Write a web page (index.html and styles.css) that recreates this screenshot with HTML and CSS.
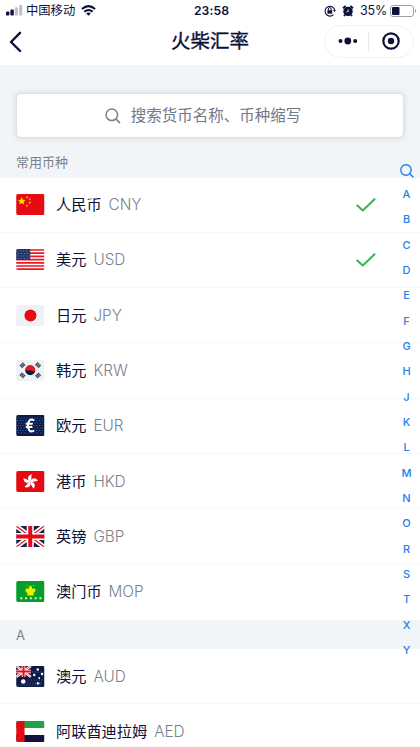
FILE: index.html
```html
<!DOCTYPE html>
<html lang="zh-CN">
<head>
<meta charset="UTF-8">
<meta name="viewport" content="width=device-width, initial-scale=1">
<title>火柴汇率</title>
<link rel="stylesheet" href="styles.css">
</head>
<body>
<div class="app">
  <header class="top">
    <div class="status">
      <div class="status-left">
        <svg class="signal" width="17" height="11" viewBox="0 0 17 11"><rect x="0" y="6.5" width="3.4" height="4" rx="1" fill="#0d1038"/><rect x="4.4" y="4.5" width="3.4" height="6" rx="1" fill="#0d1038"/><rect x="8.8" y="2.3" width="3.2" height="8.2" rx="1" fill="#c0c1cb"/><rect x="13.1" y="0" width="3.2" height="10.5" rx="1" fill="#c0c1cb"/></svg>
        <span class="carrier">中国移动</span>
        <svg class="wifi" width="15" height="11" viewBox="0 0 15 11" fill="none" stroke="#0d1038" stroke-width="2"><path d="M.9 4.1Q7.5-1.8 14.1 4.1M3.3 6.8Q7.5 3.2 11.7 6.8"/><path d="M5.2 8.5Q7.5 6.7 9.8 8.5L7.5 10.8Z" fill="#0d1038" stroke="none"/></svg>
      </div>
      <span class="clock">23:58</span>
      <div class="status-right">
        <svg width="12" height="12" viewBox="0 0 12 12" fill="none" stroke="#0d1038"><path d="M9.5 9.6A4.9 4.9 0 1 1 10.7 5" stroke-width="1.1"/><path d="M8.9 4.9h3L10.6 7Z" fill="#0d1038" stroke="none"/><rect x="3.4" y="5.2" width="4.8" height="3.5" fill="#0d1038" stroke="none"/><path d="M4.4 5.5V4a1.4 1.4 0 0 1 2.8 0v1.5"/></svg>
        <svg class="alarm" width="12" height="12" viewBox="0 0 12 12"><circle cx="6" cy="6.4" r="4.7" fill="#0d1038"/><path d="M1 3.2 3.6 1M11 3.2 8.4 1M3 9.8 2 11M9 9.8l1 1.2" stroke="#0d1038" stroke-width="1.9"/><path d="M6.2 4.2v2.6H4.4" fill="none" stroke="#fff" stroke-width=".8"/></svg>
        <span class="percent">35%</span>
        <svg width="27" height="12" viewBox="0 0 27 12"><rect x=".5" y=".5" width="23" height="11" rx="2.5" fill="#fff" stroke="#9ea0ab"/><rect x="2" y="2" width="7.5" height="8" rx="1" fill="#0d1038"/><path d="M25 4c1.5.5 1.5 3.5 0 4z" fill="#9ea0ab"/></svg>
      </div>
    </div>
    <nav class="nav">
      <svg class="back" width="14" height="22" viewBox="0 0 14 22" fill="none" stroke="#0d1038" stroke-width="2.4" stroke-linecap="round" stroke-linejoin="round"><path d="M11 2.8 2 12l9 8.8"/></svg>
      <h1>火柴汇率</h1>
      <div class="capsule">
        <svg width="20" height="8" viewBox="0 0 20 8" fill="#0d1038"><circle cx="2.5" cy="4" r="2"/><circle cx="9.8" cy="4" r="3.4"/><circle cx="17.2" cy="4" r="2"/></svg>
        <i></i>
        <svg width="18" height="18" viewBox="0 0 18 18"><circle cx="9" cy="9" r="7.7" fill="none" stroke="#0d1038" stroke-width="2.2"/><circle cx="9" cy="9" r="3.2" fill="#0d1038"/></svg>
      </div>
    </nav>
  </header>

  <section class="search-area">
    <div class="search">
      <svg width="16" height="16" viewBox="0 0 16 16" fill="none" stroke="#7b7f90" stroke-width="1.5" stroke-linecap="round"><circle cx="6.8" cy="6.8" r="5.8"/><path d="m11.1 11.1 3.5 3.5"/></svg>
      <span>搜索货币名称、币种缩写</span>
    </div>
    <h2>常用币种</h2>
  </section>

  <ul class="list">
    <li><svg class="flag" viewBox="0 0 28 21"><rect width="28" height="21" fill="#e60a12"/><path d="m5.5 3 1.1 2.7 2.8.2-2.1 1.8.7 2.8-2.5-1.6L3 10.5l.7-2.8-2.1-1.8 2.8-.2Z" fill="#f8e500"/><path d="M10 2.5h1.6v1.6H10zM12.7 4.5h1.6v1.6h-1.6zM12.7 7.8h1.6v1.6h-1.6zM10 10.8h1.6v1.6H10z" fill="#f3c90c"/></svg><b>人民币</b><span>CNY</span><svg class="check" viewBox="0 0 20 14"><path d="m1.3 7.5 5.5 5L18.5 1.3"/></svg></li>
    <li><svg class="flag" viewBox="0 0 28 21"><rect width="28" height="21" fill="#fff"/><path d="M0 1h28M0 4.2h28M0 7.4h28M0 10.6h28M0 13.8h28M0 17h28M0 20.2h28" stroke="#e81922" stroke-width="1.7"/><path d="M0 0h14v11H0z" fill="#203568"/><path d="M1 2h13M2 4.5h12M1 7h13M2 9.5h12" stroke="#638bc0" stroke-dasharray="1 2"/></svg><b>美元</b><span>USD</span><svg class="check" viewBox="0 0 20 14"><path d="m1.3 7.5 5.5 5L18.5 1.3"/></svg></li>
    <li><svg class="flag" viewBox="0 0 28 21"><rect width="28" height="21" fill="#f0f1f3"/><circle cx="14.2" cy="10.5" r="6" fill="#e90b13"/></svg><b>日元</b><span>JPY</span></li>
    <li><svg class="flag" viewBox="0 0 28 21"><rect width="28" height="21" fill="#f0f1f3"/><circle cx="14" cy="10.2" r="5" fill="#11163e"/><path d="M9.3 8.6a5 5 0 0 1 9.6 2.2c-2 1.8-3.2-.7-5-.5s-3.3 1.5-4.6-1.7" fill="#e91a20"/><g stroke="#3e4152" stroke-width="4" stroke-dasharray="1.3 .4"><path d="m4.5 6.8 3.7-3.2M20 3.6l3.7 3.2M4.5 13.8 8.2 17M20 17l3.7-3.2"/></g></svg><b>韩元</b><span>KRW</span></li>
    <li><svg class="flag" viewBox="0 0 28 21"><rect width="28" height="21" fill="#10183d"/><g stroke="#2d78d8" stroke-width="1" stroke-dasharray="1 1.7"><path d="M2 3h25M1 5.5h26M2 8h25M1 10.5h26M2 13h25M1 15.5h26M2 18h25"/></g><path d="M18 5.5c-4-2.5-6.2 0-6.2 5s2.3 7.4 6.2 5M9.5 8.8h7M9.5 12h6.6" fill="none" stroke="#fff" stroke-width="2"/></svg><b>欧元</b><span>EUR</span></li>
    <li><svg class="flag" viewBox="0 0 28 21"><rect width="28" height="21" fill="#e60a12"/><g transform="translate(14 10.7)" fill="#fff"><path id="petal" d="M0 0C-3.4-2.3-2.8-6.8 1.8-7.5.4-5.2 2.2-3.4 0 0"/><use href="#petal" transform="rotate(72)"/><use href="#petal" transform="rotate(144)"/><use href="#petal" transform="rotate(216)"/><use href="#petal" transform="rotate(288)"/></g></svg><b>港币</b><span>HKD</span></li>
    <li><svg class="flag" viewBox="0 0 28 21"><g id="union"><rect width="28" height="21" fill="#15214e"/><path d="m0 0 28 21M28 0 0 21" stroke="#fff" stroke-width="4.6"/><path d="m0 0 28 21M28 0 0 21" stroke="#e51c26" stroke-width="1.3"/><path d="M14 0v21M0 10.5h28" stroke="#fff" stroke-width="7"/><path d="M14 0v21M0 10.5h28" stroke="#e60a16" stroke-width="4"/></g></svg><b>英镑</b><span>GBP</span></li>
    <li><svg class="flag" viewBox="0 0 28 21"><rect width="28" height="21" fill="#079d2c"/><path d="M14.2 4.2q2.2 1.8 1.6 3.5 4.2-.9 3.3 2-.5 2.2-2.4 2.3l1.3 2q-3.8 1-7.6 0l1.3-2q-2.1-.1-2.5-2.3-.7-2.9 3.4-2Q12 6 14.2 4.2" fill="#f3ec00"/><path d="m10.5 5 .8-.7M16.8 4l.8.8" stroke="#f3ec00"/><path d="M4 17.3h22" stroke="#d6f1bd" stroke-width="2" stroke-dasharray="2 2.8"/></svg><b>澳门币</b><span>MOP</span></li>
  </ul>
  <h2 class="letter">A</h2>
  <ul class="list">
    <li><svg class="flag" viewBox="0 0 28 21"><rect width="28" height="21" fill="#11183d"/><use href="#union" transform="scale(.52)"/><g fill="#fff"><circle cx="7" cy="15.5" r="2.3"/><circle cx="21.5" cy="3.5" r="1.2"/><circle cx="18" cy="9" r="1.2"/><circle cx="25.8" cy="8" r="1.2"/><circle cx="23" cy="12" r=".9"/><circle cx="21.8" cy="17.3" r="1.4"/></g><path d="M12 14h15M11 17h16M16 6h11M2 19h24" stroke="#2d78d8" stroke-width="1" stroke-dasharray="1 1.7"/></svg><b>澳元</b><span>AUD</span></li>
    <li><svg class="flag" viewBox="0 0 28 21"><rect width="28" height="21" fill="#fff"/><path d="M0 0h28v7H0z" fill="#21a345"/><path d="M0 14h28v7H0z" fill="#10153d"/><path d="M0 0h8.3v21H0z" fill="#e60a12"/></svg><b>阿联酋迪拉姆</b><span>AED</span></li>
  </ul>

  <aside class="index">
    <svg width="14" height="14" viewBox="0 0 14 14" fill="none" stroke="#257eeb" stroke-width="1.4" stroke-linecap="round"><circle cx="6" cy="6" r="5.2"/><path d="m10 10 3.1 3.1"/></svg>
    <span>A</span><span>B</span><span>C</span><span>D</span><span>E</span><span>F</span><span>G</span><span>H</span><span>J</span><span>K</span><span>L</span><span>M</span><span>N</span><span>O</span><span>R</span><span>S</span><span>T</span><span>X</span><span>Y</span>
  </aside>
</div>
</body>
</html>
```
FILE: styles.css
```css
* { box-sizing: border-box; }
body {
  margin: 0;
  background: #fff;
  color: #0d1038;
  font-family: Inter, "Noto Sans CJK SC", sans-serif;
}
h1, h2, ul { margin: 0; padding: 0; }
svg { display: block; flex: none; }
.app { position: relative; height: 747px; overflow: hidden; }

.top { height: 65px; }
.status {
  display: grid;
  grid-template-columns: 1fr auto 1fr;
  align-items: center;
  height: 21px;
  padding: 0 3px 0 6px;
}
.status-left, .status-right { display: flex; align-items: center; }
.status-right { justify-content: flex-end; }
.carrier { margin-left: 3px; font-size: 12.3px; line-height: 18px; }
.wifi { margin-left: 6px; }
.clock { font-size: 12.2px; font-weight: 600; letter-spacing: .1px; }
.alarm { margin-left: 6px; }
.percent { margin: 0 3px 0 6px; font-size: 12.5px; letter-spacing: -.2px; }
.nav {
  display: grid;
  grid-template-columns: 1fr auto 1fr;
  align-items: center;
  height: 40px;
  padding: 0 6px 0 9px;
}
.nav h1 {
  padding-right: 3px;
  font-size: 19.5px;
  line-height: 28px;
  font-weight: 400;
  -webkit-text-stroke: .35px currentColor;
}
.capsule {
  display: flex;
  align-items: center;
  justify-self: end;
  width: 90px;
  height: 33px;
  padding-left: 13px;
  border: 1px solid #f0f2f4;
  border-radius: 17px;
}
.capsule i { width: 1px; height: 19px; margin: 0 13px 0 10px; background: #e3e9ec; }

.search-area { height: 112.5px; padding: 28px 16px 0; background: #f1f5f8; }
.search {
  display: flex;
  align-items: center;
  justify-content: center;
  gap: 10px;
  height: 45px;
  padding-right: 14px;
  border: 1px solid #dedfe1;
  border-radius: 5px;
  background: #fff;
  box-shadow: 0 0 6px rgba(0, 0, 0, .12);
  color: #747887;
  font-size: 15.5px;
}
.search span { padding-bottom: 4px; }
h2 { color: #7b7f8d; font-size: 13px; line-height: 20px; font-weight: 400; }
.search-area h2 { margin-top: 14px; }

.list { list-style: none; }
.list li {
  display: flex;
  align-items: center;
  height: 55.33px;
  padding: 0 44px 0 16px;
  border-bottom: 1px solid #f7f7f9;
}
.list li:last-child { border-bottom-color: transparent; }
.flag { width: 28.5px; height: 21px; margin-right: 11.5px; border-radius: 2px; }
.list b { padding-bottom: 3px; font-size: 15.2px; font-weight: 400; }
.list span { margin-left: 7px; color: #7b7f8d; font-size: 15.3px; font-weight: 300; }
.check {
  width: 20px;
  height: 14px;
  margin-left: auto;
  fill: none;
  stroke: #32b44d;
  stroke-width: 2;
  stroke-linecap: round;
}
.letter { height: 29px; padding-left: 16px; background: #f1f5f8; line-height: 30px; }

.index {
  position: absolute;
  top: 164px;
  right: 6px;
  display: flex;
  flex-direction: column;
  align-items: center;
  width: 15px;
  color: #257eeb;
  font-size: 11px;
  font-weight: 500;
}
.index svg { margin-bottom: 4px; }
.index span { height: 25.33px; line-height: 25.33px; }
```
